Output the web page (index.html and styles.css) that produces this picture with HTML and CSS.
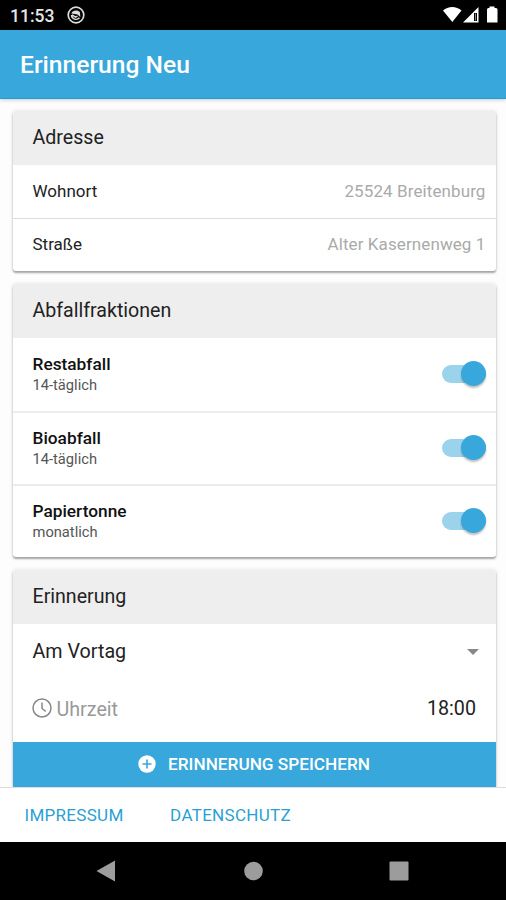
FILE: index.html
```html
<!DOCTYPE html>
<html lang="de">
<head>
    <meta charset="UTF-8">
    <meta name="viewport" content="width=device-width, initial-scale=1.0">
    <title>Erinnerung Neu</title>
    <link rel="stylesheet" href="styles.css">
</head>
<body>
    <div class="statusbar">
        <span class="clock">11:53</span>
        <svg class="status-app" width="18" height="18" viewBox="0 0 18 18">
            <circle cx="9" cy="9" r="7.8" fill="none" stroke="#ddd" stroke-width="1.7"/>
            <path d="M4.300 7.500C5.500 4 11 3.400 13 6.500L13.300 11 10.500 8.500 7.500 8z" fill="#ddd"/>
            <path d="M4.500 9c0 4.500 5.500 5.500 8 2.800M5 8.800l3.500 2.400 2-1" fill="none" stroke="#ddd" stroke-width="1.4"/>
        </svg>
        <svg class="status-icons" width="56" height="18" viewBox="0 0 56 18">
            <path d="M0 4.500C5-.2 13.500-.2 18.500 4.500L9.300 16z" fill="#fff"/>
            <path d="M35.500 1v15.500H20z" fill="#fff"/>
            <path d="M31 7h3v8h-3z" fill="#000"/>
            <path d="M32.500 7.500v7" stroke="#aaa" stroke-width=".8"/>
            <path d="M46.500.5h5v1.500h1.500q1.500 0 1.500 1.500v13h-10.500v-13q0-1.500 1.500-1.500h1z" fill="#fff"/>
        </svg>
    </div>

    <header class="toolbar">
        <h1>Erinnerung Neu</h1>
    </header>

    <main class="content">
        <section class="card">
            <h2>Adresse</h2>
            <div class="item">
                <span>Wohnort</span>
                <span class="value">25524 Breitenburg</span>
            </div>
            <div class="item">
                <span>Straße</span>
                <span class="value">Alter Kasernenweg 1</span>
            </div>
        </section>

        <section class="card">
            <h2>Abfallfraktionen</h2>
            <div class="fraktion">
                <div>
                    <strong>Restabfall</strong>
                    <small>14-täglich</small>
                </div>
                <span class="toggle"></span>
            </div>
            <div class="fraktion">
                <div>
                    <strong>Bioabfall</strong>
                    <small>14-täglich</small>
                </div>
                <span class="toggle"></span>
            </div>
            <div class="fraktion">
                <div>
                    <strong>Papiertonne</strong>
                    <small>monatlich</small>
                </div>
                <span class="toggle"></span>
            </div>
        </section>

        <section class="card">
            <h2>Erinnerung</h2>
            <div class="select">
                <span>Am Vortag</span>
                <span class="arrow"></span>
            </div>
            <div class="uhrzeit">
                <svg width="20" height="20" viewBox="0 0 20 20" fill="none" stroke="#888" stroke-width="1.5">
                    <circle cx="10" cy="10" r="9"/>
                    <path d="M10 4.500v6l3.700 2.800"/>
                </svg>
                <span class="uhrzeit-label">Uhrzeit</span>
                <span class="uhrzeit-wert">18:00</span>
            </div>
            <button class="speichern">
                <svg width="18" height="18" viewBox="0 0 18 18">
                    <circle cx="9" cy="9" r="8.7" fill="#fff"/>
                    <path d="M9 4.500v9M4.500 9h9" stroke="#38a7db" stroke-width="1.6"/>
                </svg>
                <span>Erinnerung speichern</span>
            </button>
        </section>
    </main>

    <footer class="footer">
        <a>Impressum</a>
        <a>Datenschutz</a>
    </footer>

    <nav class="navbar">
        <svg width="506" height="58" viewBox="0 0 506 58" fill="#9c9c9c">
            <path d="M96.500 29L115 18.500v21z"/>
            <circle cx="253.500" cy="29" r="9.300"/>
            <rect x="389.500" y="19.500" width="19" height="19" rx="1"/>
        </svg>
    </nav>
</body>
</html>
```

FILE: styles.css
```css
* {
    box-sizing: border-box;
}
body {
    margin: 0;
    height: 900px;
    display: flex;
    flex-direction: column;
    overflow: hidden;
    font-family: Roboto, "Liberation Sans", sans-serif;
    background-color: #fdfdfd;
    color: #222;
}

/* Statusleiste */
.statusbar {
    flex: none;
    height: 30px;
    display: flex;
    align-items: center;
    padding: 0 7px 0 10px;
    background-color: #000;
    color: #e6e6e6;
}
.clock {
    font-size: 17.5px;
    font-weight: 500;
    padding-top: 2px;
}
.status-app {
    margin-left: 13px;
}
.status-icons {
    margin-left: auto;
}

.toolbar {
    flex: none;
    height: 69px;
    display: flex;
    align-items: center;
    padding: 1px 20px 0 20px;
    background-color: #38a7db;
    border-bottom: 1px solid #1f9dd6;
    box-shadow: 0 1px 4px rgba(0,0,0,0.2);
}
h1 {
    margin: 0;
    font-size: 24.6px;
    font-weight: 500;
    color: #fff;
}

/* Karten */
.content {
    flex: none;
    height: 688px;
    padding: 11.5px 10.5px 0 12.5px;
    overflow: hidden;
}
.card {
    margin-bottom: 13px;
    background-color: #fff;
    border-radius: 3px;
    box-shadow: 0 2px 2px rgba(0,0,0,0.32), 0 0 4px rgba(0,0,0,0.12);
}
h2 {
    margin: 0;
    height: 54px;
    padding-left: 20px;
    line-height: 53px;
    font-size: 19.6px;
    font-weight: 400;
    background-color: #eee;
    border-radius: 3px 3px 0 0;
}
.item {
    height: 53px;
    display: flex;
    align-items: center;
    justify-content: space-between;
    padding: 0 10px 0 20px;
    font-size: 17px;
}
.item + .item {
    padding-bottom: 2px;
    border-top: 1px solid #dcdcdc;
}
.value {
    color: #aaa;
    letter-spacing: 0.1px;
}
.fraktion {
    height: 73px;
    display: flex;
    align-items: center;
    justify-content: space-between;
    padding: 0 10px 0 20px;
}
.fraktion + .fraktion {
    border-top: 2px solid #ececec;
}
.fraktion strong,
.fraktion small {
    display: block;
}
.fraktion strong {
    font-size: 17.3px;
    font-weight: 500;
    line-height: 22px;
    color: #111;
}
.fraktion small {
    font-size: 14.7px;
    line-height: 20px;
    color: #555;
}
.toggle {
    position: relative;
    width: 44px;
    height: 18px;
    border-radius: 9px;
    background-color: #9bd3ed;
}
.toggle::after {
    content: "";
    position: absolute;
    right: 0;
    top: -4px;
    width: 25px;
    height: 25px;
    border-radius: 50%;
    background-color: #38a7db;
    box-shadow: 0 2px 2px rgba(0,0,0,0.25);
}

.select {
    height: 54px;
    display: flex;
    align-items: center;
    justify-content: space-between;
    padding: 2px 17px 0 20px;
    font-size: 19.7px;
}
.arrow {
    border: 6px solid transparent;
    border-top-color: #888;
    border-bottom: 0;
}
.uhrzeit {
    height: 64px;
    display: flex;
    align-items: center;
    padding: 0 19.5px 3px 19px;
    font-size: 19.7px;
}
.uhrzeit-label {
    margin-left: 5px;
    padding-top: 2px;
    color: #999;
}
.uhrzeit-wert {
    margin-left: auto;
}
.speichern {
    width: 100%;
    height: 46px;
    display: flex;
    align-items: center;
    justify-content: center;
    gap: 12px;
    padding: 0 0 2px 0;
    border: none;
    background-color: #38a7db;
    color: #fff;
    font-family: inherit;
    font-size: 17.2px;
    font-weight: 500;
    text-transform: uppercase;
}

.footer {
    flex: none;
    height: 55px;
    display: flex;
    align-items: center;
    gap: 46.5px;
    padding-left: 24.5px;
    border-top: 1px solid #ddd;
    background-color: #fff;
    color: #2b9fd4;
    font-size: 17px;
    letter-spacing: 0.3px;
    text-transform: uppercase;
}
.navbar {
    flex: none;
    height: 58px;
    background-color: #000;
}
.navbar svg {
    display: block;
}
```
